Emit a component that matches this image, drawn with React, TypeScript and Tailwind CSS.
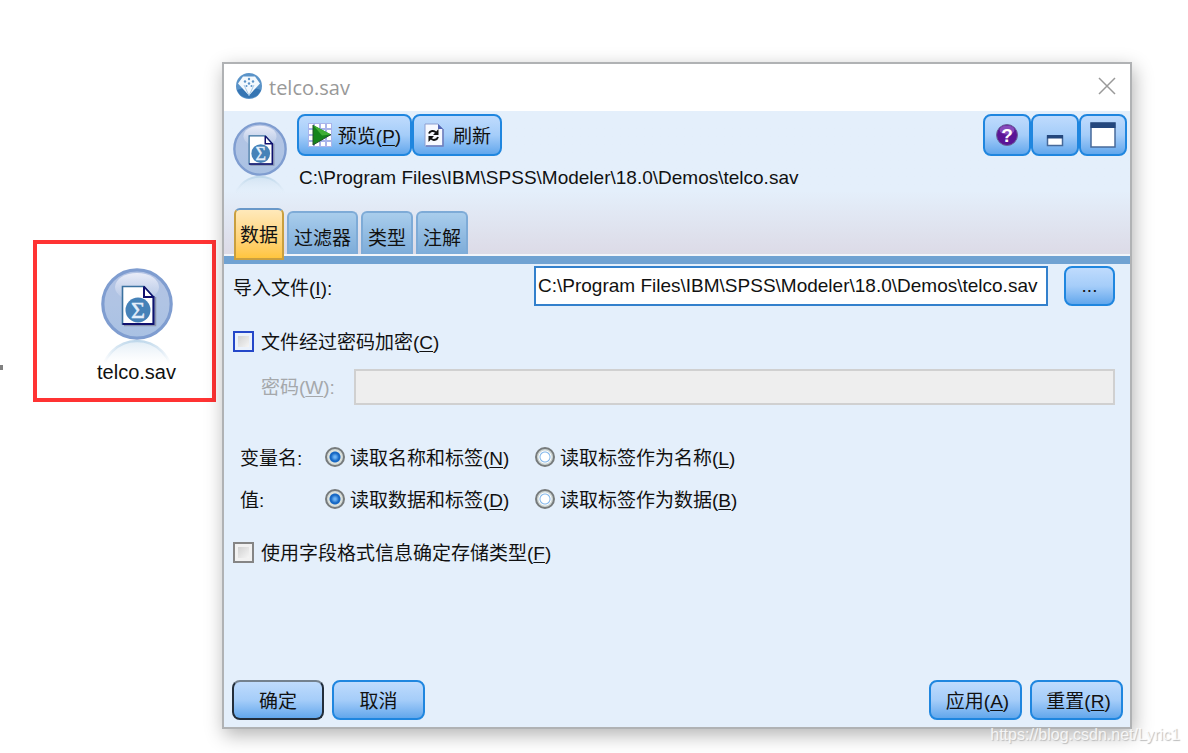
import { useId, useState } from 'react';
import type { ReactNode } from 'react';

const FILE_PATH = 'C:\\Program Files\\IBM\\SPSS\\Modeler\\18.0\\Demos\\telco.sav';

const tabs = ['数据', '过滤器', '类型', '注解'];

function NodeIcon({ className }: { className: string }) {
  const id = useId();
  return (
    <svg className={className} viewBox="0 0 72 96" fill="none" aria-hidden="true">
      <defs>
        <linearGradient id={`${id}-disc`} x1="0" y1="0" x2="0" y2="1">
          <stop offset="0" stopColor="#b3c3e4" />
          <stop offset="0.5" stopColor="#b0c4e4" />
          <stop offset="1" stopColor="#a9c1e3" />
        </linearGradient>
        <linearGradient id={`${id}-shine`} x1="0" y1="0" x2="0" y2="1">
          <stop offset="0" stopColor="#f0f2fb" stopOpacity="0.9" />
          <stop offset="1" stopColor="#dfe5f4" stopOpacity="0.1" />
        </linearGradient>
        <linearGradient id={`${id}-mirror`} gradientUnits="userSpaceOnUse" x1="0" y1="70" x2="0" y2="96">
          <stop offset="0" stopColor="#b5d2e8" />
          <stop offset="1" stopColor="#dfeaf4" stopOpacity="0" />
        </linearGradient>
      </defs>
      <circle cx="36" cy="108" r="35" fill={`url(#${id}-mirror)`} fillOpacity="0.5" stroke={`url(#${id}-mirror)`} strokeWidth="2.500" />
      <circle cx="36" cy="36" r="34.2" fill={`url(#${id}-disc)`} stroke="#7f9dd0" strokeWidth="3.2" />
      <ellipse cx="36" cy="19" rx="22" ry="14" fill={`url(#${id}-shine)`} />
      <path d="M23 57.500h31.500V29" stroke="#8a94ac" strokeWidth="1.500" />
      <path d="M21.500 18.500H43L52.500 29v27h-31z" fill="#fff" stroke="#3a719f" strokeWidth="1.600" />
      <path d="M43 18.500V29h9.500v27h-31" stroke="#10106e" strokeWidth="2" />
      <path d="M43 18.500L52.500 29" stroke="#10106e" strokeWidth="1.500" />
      <circle cx="37" cy="42" r="12.500" fill="#4682b8" />
      <text x="37" y="50" textAnchor="middle" fontFamily="Liberation Serif, serif" fontSize="24" fill="#e3eefa" stroke="#e3eefa" strokeWidth="0.500">
        Σ
      </text>
    </svg>
  );
}

function AppIcon() {
  return (
    <svg className="size-[26px] shrink-0" viewBox="0 0 26 26" aria-hidden="true">
      <circle cx="13" cy="13" r="13" fill="#5a93c8" />
      <path d="M1 17a13 13 0 0 0 24 0L13 13z" fill="#3575b3" />
      <path d="M7 3.500h12l5 7L13 22.500 2 10.500z" fill="#f4f9fd" />
      <path d="M13 22.500L8 12M13 22.500L18 12" stroke="#a8c9e6" strokeWidth="1" />
      <g fill="#5b93c7">
        <circle cx="13" cy="6" r="1.200" />
        <circle cx="9" cy="8.500" r="1.200" />
        <circle cx="17" cy="8.500" r="1.200" />
        <circle cx="13" cy="10.500" r="1.200" />
        <circle cx="10.500" cy="13" r="1" />
        <circle cx="15.500" cy="13" r="1" />
      </g>
    </svg>
  );
}

function PreviewIcon() {
  return (
    <svg className="size-6 shrink-0" viewBox="0 0 24 24" aria-hidden="true">
      <rect width="24" height="24" fill="#a9b4ea" />
      <g fill="#fff">
        {[1, 7, 13, 19].map((y) =>
          [1, 7, 13, 19].map((x) => <rect key={`${x}-${y}`} x={x} y={y} width="4" height="4" />),
        )}
      </g>
      <path d="M5 2l18 9.500L5 22z" fill="#15851b" />
      <path d="M5 2l18 9.500-9 1z" fill="#3fae35" />
      <path d="M5 2v20l18-10.500" fill="none" stroke="#24502a" strokeWidth="1" />
    </svg>
  );
}

function RefreshIcon() {
  return (
    <svg className="h-6 w-[22px] shrink-0" viewBox="0 0 22 24" aria-hidden="true">
      <path d="M2 1h13l5 5v17H2z" fill="#f7f9ff" stroke="#8d9fd0" />
      <path d="M15 1v5h5z" fill="#5366b5" />
      <path d="M20 6v17H3" fill="none" stroke="#6f7fbd" strokeWidth="1.500" />
      <g fill="none" stroke="#111" strokeWidth="2">
        <path d="M6 10.500c1-3 5-3.500 7-1" />
        <path d="M15 14c-1 3-5 4-7 1.500" />
      </g>
      <path d="M15.500 6v6H10z" fill="#111" />
      <path d="M5.500 19v-6H11z" fill="#111" />
    </svg>
  );
}

function HelpIcon() {
  return (
    <svg className="size-6" viewBox="0 0 24 24" aria-hidden="true">
      <circle cx="12" cy="12" r="10.500" fill="#5b1496" stroke="#6b6399" strokeWidth="1" />
      <ellipse cx="12" cy="7" rx="7.500" ry="4.500" fill="#9a63cc" opacity="0.7" />
      <text x="12" y="19" textAnchor="middle" fontFamily="Liberation Sans, sans-serif" fontSize="19" fontWeight="bold" fill="#fff">
        ?
      </text>
    </svg>
  );
}

function MinimizeIcon() {
  return (
    <svg className="size-[26px]" viewBox="0 0 26 26" aria-hidden="true">
      <rect x="5.500" y="14" width="15" height="9.500" fill="#fff" stroke="#476a9a" strokeWidth="1.500" />
      <rect x="5" y="13" width="16" height="3.500" fill="#24477d" />
    </svg>
  );
}

function MaximizeIcon() {
  return (
    <svg className="size-[26px]" viewBox="0 0 26 26" aria-hidden="true">
      <rect x="1" y="1" width="24" height="24" fill="#fff" stroke="#476a9a" strokeWidth="1.500" />
      <rect x="0.500" y="0.500" width="25" height="5.500" fill="#24477d" />
    </svg>
  );
}

function GlossyButton({ className, label, children }: { className: string; label?: string; children: ReactNode }) {
  return (
    <button
      type="button"
      aria-label={label}
      className={`flex shrink-0 items-center justify-center rounded-lg border-2 bg-linear-to-b from-[#bfdbfd] via-[#a5cdf9] to-[#62a7ec] ${className}`}
    >
      {children}
    </button>
  );
}

// Label text followed by its underlined mnemonic letter
function Mnemonic({ text, letter, colon }: { text: string; letter: string; colon?: boolean }) {
  return (
    <span className="inline-block pt-1 leading-6 whitespace-nowrap">
      {text}(<span className="underline underline-offset-2">{letter}</span>){colon && ':'}
    </span>
  );
}

function CheckOption({ text, letter, focused }: { text: string; letter: string; focused?: boolean }) {
  return (
    <label className="flex items-center gap-[7px]">
      <input
        type="checkbox"
        className={`size-[21px] shrink-0 appearance-none border-2 bg-linear-to-br from-[#c8c8c8] to-white ring-3 ring-inset checked:bg-[#1c78cf] ${
          focused ? 'border-[#2447c9] ring-[#eaf1fb]' : 'border-[#858585] ring-[#f1f1f1]'
        }`}
      />
      <Mnemonic text={text} letter={letter} />
    </label>
  );
}

function RadioOption({ name, text, letter, defaultChecked }: { name: string; text: string; letter: string; defaultChecked?: boolean }) {
  return (
    <label className="flex items-center gap-[5px]">
      <input
        type="radio"
        name={name}
        defaultChecked={defaultChecked}
        className="size-5 shrink-0 appearance-none rounded-full border-2 border-[#777b7c] bg-[radial-gradient(circle,#ffffff_4px,#7fb5ea_5px,#ffffff_6px,#cdd5d3_7px)] checked:bg-[radial-gradient(circle,#6db4f5_1px,#1768c4_4px,#1768c4_5px,#e3e6df_6px,#cdd5d3_8px)]"
      />
      <Mnemonic text={text} letter={letter} />
    </label>
  );
}

function CanvasNode() {
  return (
    <div className="mt-[178px] flex h-[162px] w-[183px] shrink-0 flex-col items-center border-4 border-[#ff3333] pt-6 pl-6">
      <NodeIcon className="h-24 w-[72px]" />
      <span className="-mt-1 text-xl leading-6">telco.sav</span>
    </div>
  );
}

function Header({ active, onSelect }: { active: string; onSelect: (tab: string) => void }) {
  return (
    <header className="border-b-8 border-[#70a2d2] bg-linear-to-b from-[#e4effb] from-55% to-[#dcdae6] shadow-[inset_0_-2px_0_#f2f5fa]">
      <div className="flex items-start pt-[3px] pr-[3px] pl-[9px]">
        <NodeIcon className="mt-2 h-[72px] w-[54px] shrink-0" />
        <div className="ml-[10px] flex flex-1 flex-col">
          <div className="flex">
            <GlossyButton className="h-[42px] w-[115px] gap-[6px] border-[#1f86df]">
              <PreviewIcon />
              <Mnemonic text="预览" letter="P" />
            </GlossyButton>
            <GlossyButton className="h-[42px] w-[90px] gap-2 border-[#1f86df]">
              <RefreshIcon />
              <span className="pt-1 leading-6">刷新</span>
            </GlossyButton>
          </div>
          <p className="mt-2 pl-[2px] leading-7 whitespace-nowrap">{FILE_PATH}</p>
        </div>
        <div className="flex">
          <GlossyButton label="帮助" className="h-[42px] w-12 border-[#1f86df]">
            <HelpIcon />
          </GlossyButton>
          <GlossyButton label="最小化" className="h-[42px] w-12 border-[#1f86df]">
            <MinimizeIcon />
          </GlossyButton>
          <GlossyButton label="最大化" className="h-[42px] w-12 border-[#1f86df]">
            <MaximizeIcon />
          </GlossyButton>
        </div>
      </div>
      <div role="tablist" className="mt-[14px] flex items-end gap-[3px] pl-[10px]">
        {tabs.map((tab) => (
          <button
            key={tab}
            type="button"
            role="tab"
            aria-selected={tab === active}
            onClick={() => onSelect(tab)}
            className={
              tab === active
                ? 'relative -mb-1 h-[52px] rounded-t-md border-2 border-[#c99f3f] border-t-[#6a98c8] bg-linear-to-b from-[#ffe9ba] to-[#ffc53d] px-1 pt-1'
                : 'mb-[2px] h-[43px] rounded-t-md border-2 border-b-0 border-[#7eabd7] bg-linear-to-b from-[#a9cdec] to-[#7dacd9] px-[5px] pt-3'
            }
          >
            {tab}
          </button>
        ))}
      </div>
    </header>
  );
}

export default function App() {
  const [activeTab, setActiveTab] = useState('数据');

  return (
    <div className="relative flex min-h-screen items-start overflow-hidden bg-white pt-[62px] pr-14 pb-6 font-['Liberation_Sans','Noto_Sans_CJK_SC',sans-serif] text-[19px] text-[#111]">
      <div className="mt-[303px] mr-[30px] h-[5px] w-[3px] shrink-0 bg-[#808080]" />
      <CanvasNode />

      <section className="ml-[6px] flex min-h-[667px] min-w-0 flex-1 flex-col border-2 border-[#b0b2b4] bg-[#e4effb] shadow-[2px_6px_18px_rgba(0,0,0,0.3)]">
        <div className="flex h-[47px] items-center bg-white pr-[14px] pb-1 pl-3">
          <AppIcon />
          <h1 className="ml-[7px] flex-1 pt-1 font-['Open_Sans',sans-serif] text-xl leading-6 text-[#999]">telco.sav</h1>
          <button type="button" aria-label="关闭">
            <svg className="size-[18px]" viewBox="0 0 18 18" fill="none" stroke="#999" strokeWidth="1.500">
              <path d="M1 1l16 16M17 1L1 17" />
            </svg>
          </button>
        </div>

        <Header active={activeTab} onSelect={setActiveTab} />

        <form className="flex flex-1 flex-col pt-[2px]" onSubmit={(e) => e.preventDefault()}>
          <div className="flex items-center pr-[15px] pl-[9px]">
            <label htmlFor="import-file" className="w-[301px] shrink-0 pt-1">
              <Mnemonic text="导入文件" letter="I" colon />
            </label>
            <input
              id="import-file"
              type="text"
              defaultValue={FILE_PATH}
              className="h-10 min-w-0 flex-1 border-2 border-[#3380cc] bg-white px-[2px] outline-none"
            />
            <GlossyButton label="浏览" className="ml-4 h-10 w-[51px] border-[#1f86df]">
              ...
            </GlossyButton>
          </div>

          <div className="mt-[21px] pl-[9px]">
            <CheckOption text="文件经过密码加密" letter="C" focused />
          </div>

          <div className="mt-[14px] flex items-center pr-[15px] pl-[37px]">
            <label htmlFor="password" className="w-[93px] shrink-0 text-[#a5a8ab]">
              <Mnemonic text="密码" letter="W" colon />
            </label>
            <input
              id="password"
              type="password"
              disabled
              className="h-9 min-w-0 flex-1 border-2 border-[#d0d0d0] bg-[#eeeeee] px-1"
            />
          </div>

          <div className="mt-[38px] grid grid-cols-[85px_210px_1fr] gap-y-[14px] pl-4">
            <span className="pt-1 leading-6">变量名:</span>
            <RadioOption name="names" text="读取名称和标签" letter="N" defaultChecked />
            <RadioOption name="names" text="读取标签作为名称" letter="L" />
            <span className="pt-1 leading-6">值:</span>
            <RadioOption name="values" text="读取数据和标签" letter="D" defaultChecked />
            <RadioOption name="values" text="读取标签作为数据" letter="B" />
          </div>

          <div className="mt-[25px] pl-[9px]">
            <CheckOption text="使用字段格式信息确定存储类型" letter="F" />
          </div>

          <div className="mt-auto flex gap-2 pr-[7px] pb-[7px] pl-2">
            <GlossyButton className="h-10 w-[92px] border-[#222d3a] border-t-[#74818f] pt-1">确定</GlossyButton>
            <GlossyButton className="h-10 w-[93px] border-[#1f86df] pt-1">取消</GlossyButton>
            <GlossyButton className="ml-auto h-10 w-[93px] border-[#1f86df] pl-1">
              <Mnemonic text="应用" letter="A" />
            </GlossyButton>
            <GlossyButton className="h-10 w-[93px] border-[#1f86df] pl-1">
              <Mnemonic text="重置" letter="R" />
            </GlossyButton>
          </div>
        </form>
      </section>

      <a
        href="#blog"
        className="absolute right-2 bottom-2 text-base leading-5 text-white/80 [text-shadow:1px_1px_1px_#bbb]"
      >
        https://blog.csdn.net/Lyric1
      </a>
    </div>
  );
}
